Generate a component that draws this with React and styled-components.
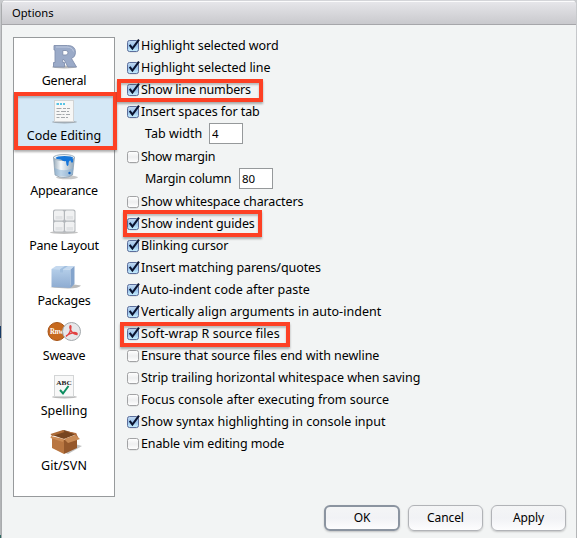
import React from "react";
import styled, { createGlobalStyle, css } from "styled-components";

const GlobalStyle = createGlobalStyle`
  * { box-sizing: border-box; }
  body { margin: 0; overflow: hidden; background: #b9bbbe; }
`;

const Desktop = styled.div`
  position: relative;
  width: 577px;
  height: 538px;
  padding: 0 1px 0 1px;
  background: linear-gradient(#c9cbce, #a9abae 60%, #b4b6b8);
  font-family: "Noto Sans", "Open Sans", sans-serif;
  font-size: 12.5px;
  color: #000;
`;

const DesktopSliver = styled.span`
  position: absolute;
  left: 0;
  top: ${(p) => p.$top}px;
  width: 1px;
  height: ${(p) => p.$height}px;
  background: ${(p) => p.$color};
`;

const Dialog = styled.section`
  display: flex;
  flex-direction: column;
  height: 538px;
  border-left: 1px solid #a9abad;
  border-radius: 5px 5px 0 0;
  background: #f2f4f4;
  overflow: hidden;
`;

const TitleBar = styled.header`
  display: flex;
  align-items: center;
  height: 25px;
  flex: none;
  padding: 0 10px;
  border-top: 1px solid #d4d5d9;
  border-bottom: 1px solid #a6a6aa;
  box-shadow: inset 0 1px 0 #fbfbfc;
  background: linear-gradient(#e7e7eb, #c9c9cd);
  font-size: 11.2px;
`;

const Content = styled.div`
  display: flex;
  align-items: flex-start;
  height: 472px;
  padding: 10px 0 0 11px;
`;

const Sections = styled.nav`
  width: 102px;
  height: 460px;
  margin-top: 2px;
  flex: none;
  border: 1px solid #979a9c;
  background: #fff;
`;

const SectionItem = styled.div`
  position: relative;
  display: flex;
  flex-direction: column;
  align-items: center;
  height: 55px;
  background: ${(p) => (p.$selected ? "#d5e8f6" : "transparent")};
`;

const SectionIcon = styled.svg`
  display: block;
  flex: none;
  width: 36px;
  height: 28px;
  margin-top: 4px;
`;

const SectionLabel = styled.span`
  margin-top: 1px;
  line-height: 20px;
  white-space: nowrap;
  letter-spacing: ${(p) => p.$spacing}px;
`;

const Settings = styled.div`
  margin-left: 12px;
`;

const SettingRow = styled.label`
  position: relative;
  display: flex;
  align-items: center;
  height: 22px;
  white-space: nowrap;
`;

const NumberRow = styled(SettingRow)`
  align-items: flex-start;
  height: 23px;
  padding-left: 18px;
  gap: 8px;
`;

const RowText = styled.span`
  line-height: 20px;
  padding-top: ${(p) => (p.$width ? 1 : 0)}px;
  letter-spacing: ${(p) => p.$spacing}px;
  ${(p) => p.$width && css`width: ${p.$width}px;`}
`;

const CheckSvg = styled.svg`
  display: block;
  flex: none;
  width: 14px;
  height: 16px;
  overflow: visible;
`;

const NumberInput = styled.input`
  width: 34px;
  height: 21px;
  padding: 0 2px;
  border: 1px solid #96999b;
  outline: none;
  background: #fff;
  font: 11.5px "Noto Sans", sans-serif;
  color: #000;
`;

const Marker = styled.span`
  position: absolute;
  z-index: 2;
  left: ${(p) => p.$left}px;
  top: ${(p) => p.$top}px;
  width: ${(p) => p.$width}px;
  height: ${(p) => p.$height}px;
  border: 4px solid #fd4024;
  box-shadow: 0 2px 2px rgba(60, 60, 60, 0.4), inset 0 2px 2px rgba(60, 60, 60, 0.3);
  pointer-events: none;
`;

const Footer = styled.footer`
  display: flex;
  justify-content: flex-end;
  align-items: flex-start;
  gap: 8px;
  padding: 8px 10px 0 0;
`;

const Button = styled.button`
  width: ${(p) => (p.$primary ? 76 : 75)}px;
  height: 26px;
  padding: 0 0 1px;
  border: ${(p) => (p.$primary ? "2px solid #8b94a0" : "1px solid #b1b3b7")};
  border-radius: 6px;
  background: linear-gradient(#f4f5f6, #f1f2f5 50%, #fdfdfe);
  box-shadow: 0 1px 2px rgba(0, 0, 0, 0.2);
  font: 12px "Noto Sans", sans-serif;
  letter-spacing: -0.1px;
  color: #000;
`;

function CheckBox({ checked }) {
  return (
    <CheckSvg viewBox="0 0 14 16">
      <defs>
        <linearGradient id="boxOn" x2="0" y2="1">
          <stop stopColor="#c4daf1" />
          <stop offset=".5" stopColor="#98c1ea" />
          <stop offset="1" stopColor="#c9f1ff" />
        </linearGradient>
        <linearGradient id="boxOff" x2="0" y2="1">
          <stop stopColor="#fff" />
          <stop offset=".5" stopColor="#eeeff0" />
          <stop offset="1" stopColor="#fff" />
        </linearGradient>
      </defs>
      <rect x=".8" y="3" width="10.8" height="11" rx="2.3" fill="none" stroke="#000" strokeOpacity=".12" />
      <rect x=".5" y="2.5" width="11" height="11" rx="2" fill={checked ? "url(#boxOn)" : "url(#boxOff)"} stroke={checked ? "#5c6e9c" : "#a2a3a5"} />
      {checked && <path d="M2.7 6.9 5.4 10.6 12 1.7" fill="none" stroke="#0b1430" strokeWidth="2.1" />}
    </CheckSvg>
  );
}

const shadow = <ellipse cx="18.5" cy="25" rx="12.5" ry="1.5" fill="#666" opacity=".45" />;

const icons = {
  general: (
    <>
      {shadow}
      <path d="M8 3.500H21.500Q29.500 3.500 29.500 10.500Q29.500 15 25.500 16.500L30.500 25H22L18 17.500H16.800V20.500H18.500V25H7.500V20.500H9V8H8ZM16.800 8.500V13H20Q22 13 22 10.800Q22 8.500 20 8.500Z" fill="#9aaac8" stroke="#8190ae" strokeWidth=".9" fillRule="evenodd" />
      <path d="M10 5H21Q26.500 5.300 27.500 9.500" fill="none" stroke="#bfcadf" />
    </>
  ),
  code: (
    <>
      {shadow}
      <rect x="8.500" y="3.500" width="19" height="21" fill="#f7f7f6" stroke="#d2d4d5" />
      <path d="M10.500 7h2.500m1 0h2m1 0h2" stroke="#23b3df" strokeWidth="1.400" />
      <path d="M10.500 11.500h5m1.500 0h3m1 0h3M10.500 14.500h3m1.500 0h5m1 0h2M10.500 17.500h5m1 0h2m1.500 0h4M10.500 20.500h3m1.500 0h4m1 0h2" stroke="#a4a8ab" strokeWidth="1.100" />
    </>
  ),
  appearance: (
    <>
      <ellipse cx="21" cy="25.300" rx="11" ry="2" fill="#777" opacity=".4" />
      <path d="M7.500 5 9 23Q18 28 26.500 23L28.500 5Z" fill="url(#bucket)" stroke="#8499ad" strokeWidth=".7" />
      <ellipse cx="18" cy="5.500" rx="10.500" ry="3" fill="#eef3f7" stroke="#8b9dac" strokeWidth=".8" />
      <ellipse cx="18.500" cy="5.900" rx="8.800" ry="2" fill="#1877d8" />
      <path d="M15 7H27V10Q25.500 12 24.500 8.500Q22.500 8 22.500 13Q20.500 16 20 9Q17 10 15 7Z" fill="#1475da" />
      <path d="M8.500 16Q18 20.500 27.500 16L26.500 22.500Q18 26.500 9.200 22.500Z" fill="#86afd6" opacity=".5" />
      <circle cx="23.500" cy="21" r="1.200" fill="#1261bd" />
    </>
  ),
  panes: (
    <>
      <ellipse cx="18" cy="25.500" rx="14" ry="1.500" fill="#777" opacity=".45" />
      <rect x="7" y="2.500" width="22.500" height="23" rx="2" fill="#b3b7bb" />
      <g fill="#f0f1f2">
        <rect x="8" y="3.500" width="9.800" height="10" rx="1.500" />
        <rect x="19" y="3.500" width="9.500" height="10" rx="1.500" />
        <rect x="8" y="14.700" width="9.800" height="9.800" rx="1.500" />
        <rect x="19" y="14.700" width="9.500" height="9.800" rx="1.500" />
      </g>
      <g fill="#e1e3e5">
        <rect x="9.500" y="9" width="7" height="3.500" />
        <rect x="20.500" y="9" width="6.500" height="3.500" />
        <rect x="9.500" y="20" width="7" height="3.500" />
        <rect x="20.500" y="20" width="6.500" height="3.500" />
      </g>
    </>
  ),
  packages: (
    <>
      <path d="M4 25.500 28 22.500 35 23.500Q33 26.500 22 26.500Z" fill="#777" opacity=".5" />
      <path d="M5.500 7 10 4H28.500L24.500 7.500Z" fill="#c5d9ef" />
      <path d="M5.500 7 24.500 7.500V26L5.500 25Z" fill="url(#cube)" />
      <path d="M24.500 7.500 28.500 4V22L24.500 26Z" fill="#84a4cc" />
      <path d="M14 7.200 19 4H22L17 7.300V10.500H14Z" fill="#a1bfdf" />
    </>
  ),
  sweave: (
    <>
      <circle cx="11" cy="14.500" r="9" fill="#c7691e" stroke="#a75415" />
      <text x="10.700" y="17.300" textAnchor="middle" textLength="13.500" lengthAdjust="spacingAndGlyphs" fontFamily="Liberation Serif, serif" fontWeight="bold" fontSize="8" fill="#fff">Rnw</text>
      <circle cx="25.500" cy="14.500" r="9" fill="#e7e8ea" stroke="#a2a7ab" />
      <path d="M20 19.500Q25 16 25 9.500Q24 7.500 23.800 10.500Q25 16.500 31 17.500Q32 15.500 28 15.500Q23 16.500 20 19" fill="none" stroke="#e14343" strokeWidth="1.300" />
    </>
  ),
  spelling: (
    <>
      {shadow}
      <rect x="8.500" y="3.500" width="19" height="21" fill="#f8f8f8" stroke="#d3d5d6" />
      <text x="18" y="13" textAnchor="middle" textLength="15.500" lengthAdjust="spacingAndGlyphs" fontFamily="Liberation Serif, serif" fontWeight="bold" fontSize="7" fill="#222">ABC</text>
      <path d="M14 18 17 21.500 22.500 14" fill="none" stroke="#0c8d60" strokeWidth="2" />
    </>
  ),
  git: (
    <>
      <path d="M17 25 29 17 36 19 22 27Z" fill="#777" opacity=".45" />
      <path d="M6 8 18 3 31 7 18 12Z" fill="#77451f" />
      <path d="M6 10 18 13V27L6 21Z" fill="#b97641" />
      <path d="M18 13 31 8V21L18 27Z" fill="#95582c" />
      <path d="M6 9 4.500 7 17 3 18.500 5Z" fill="#ad6b37" />
      <path d="M19 4 30 6 33 12 30.500 11 28 7Z" fill="#b26d3d" />
      <path d="M5 9 18 12 17 15 4.500 11Z" fill="#cd8d57" />
      <path d="M18 12 29 8 34 12 22 16Z" fill="#c98b56" />
    </>
  ),
};

function Gradients() {
  return (
    <defs>
      <linearGradient id="bucket">
        <stop stopColor="#98aab9" />
        <stop offset=".35" stopColor="#f6fafc" />
        <stop offset="1" stopColor="#8ea5b9" />
      </linearGradient>
      <linearGradient id="cube" x2="0" y2="1">
        <stop stopColor="#b4cee9" />
        <stop offset="1" stopColor="#8dabd1" />
      </linearGradient>
    </defs>
  );
}

const sections = [
  { name: "General", icon: "general", spacing: -0.2 },
  { name: "Code Editing", icon: "code", spacing: 0, selected: true },
  { name: "Appearance", icon: "appearance", spacing: -0.28 },
  { name: "Pane Layout", icon: "panes", spacing: -0.25 },
  { name: "Packages", icon: "packages", spacing: -0.25 },
  { name: "Sweave", icon: "sweave", spacing: -0.3 },
  { name: "Spelling", icon: "spelling", spacing: 0 },
  { name: "Git/SVN", icon: "git", spacing: 0.1 },
];

const settings = [
  { text: "Highlight selected word", on: true, spacing: -0.08 },
  { text: "Highlight selected line", on: true, spacing: -0.05 },
  { text: "Show line numbers", on: true, mark: [-10, 0, 146, 23], spacing: -0.15 },
  { text: "Insert spaces for tab", on: true, spacing: -0.08 },
  { text: "Tab width", value: "4", width: 56, spacing: 0.05 },
  { text: "Show margin", spacing: -0.3 },
  { text: "Margin column", value: "80", width: 86, spacing: -0.22 },
  { text: "Show whitespace characters", spacing: -0.13 },
  { text: "Show indent guides", on: true, mark: [-4, -3, 139, 27], spacing: -0.1 },
  { text: "Blinking cursor", on: true, spacing: -0.07 },
  { text: "Insert matching parens/quotes", on: true, spacing: -0.08 },
  { text: "Auto-indent code after paste", on: true, spacing: 0.03 },
  { text: "Vertically align arguments in auto-indent", on: true, spacing: 0.03 },
  { text: "Soft-wrap R source files", on: true, mark: [-7, -1, 170, 25], spacing: 0.06 },
  { text: "Ensure that source files end with newline", spacing: -0.04 },
  { text: "Strip trailing horizontal whitespace when saving", spacing: -0.04 },
  { text: "Focus console after executing from source" },
  { text: "Show syntax highlighting in console input", on: true },
  { text: "Enable vim editing mode", spacing: -0.11 },
];

function Setting({ text, on, value, width, mark, spacing = 0 }) {
  if (value) {
    return (
      <NumberRow>
        <RowText $width={width} $spacing={spacing}>{text}</RowText>
        <NumberInput defaultValue={value} />
      </NumberRow>
    );
  }
  return (
    <SettingRow>
      <CheckBox checked={on} />
      <RowText $spacing={spacing}>{text}</RowText>
      {mark && <Marker $left={mark[0]} $top={mark[1]} $width={mark[2]} $height={mark[3]} />}
    </SettingRow>
  );
}

export default function App() {
  return (
    <Desktop>
      <GlobalStyle />
      <DesktopSliver $top={326} $height={12} $color="#173b66" />
      <DesktopSliver $top={535} $height={3} $color="#2d6a63" />
      <Dialog>
        <TitleBar>Options</TitleBar>
        <Content>
          <Sections>
            {sections.map((s) => (
              <SectionItem key={s.name} $selected={s.selected}>
                <SectionIcon viewBox="0 0 36 28">
                  <Gradients />
                  {icons[s.icon]}
                </SectionIcon>
                <SectionLabel $spacing={s.spacing}>{s.name}</SectionLabel>
                {s.selected && <Marker $left={0} $top={-1} $width={103} $height={58} />}
              </SectionItem>
            ))}
          </Sections>
          <Settings>
            {settings.map((s) => (
              <Setting key={s.text} {...s} />
            ))}
          </Settings>
        </Content>
        <Footer>
          <Button $primary>OK</Button>
          <Button>Cancel</Button>
          <Button>Apply</Button>
        </Footer>
      </Dialog>
    </Desktop>
  );
}
